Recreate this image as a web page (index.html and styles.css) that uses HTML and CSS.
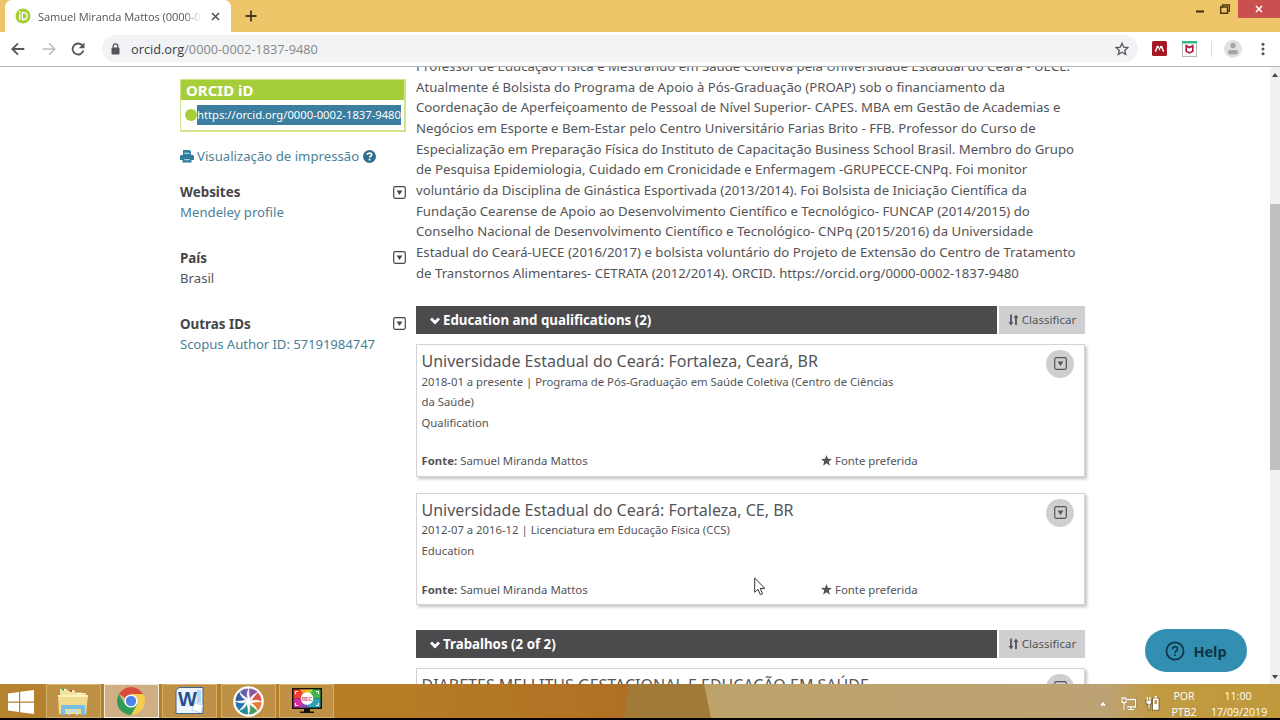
FILE: index.html
```html
<!doctype html>
<html lang="pt-BR">

<head>
    <title>Samuel Miranda Mattos (0000-0002-1837-9480)</title>
    <meta charset="utf-8">
    <link rel="stylesheet" href="styles.css">
</head>

<body>
    <svg width="0" height="0" class="defs">
        <symbol id="toggle" viewBox="0 0 13 13">
            <rect x="0.7" y="0.7" width="11.6" height="11.6" rx="1.5" fill="none" stroke="currentColor" stroke-width="1.2"/>
            <path d="M3.6 4.5h5.8L6.5 9z" fill="currentColor"/>
        </symbol>
        <symbol id="chevron" viewBox="0 0 10 8">
            <path d="M1 1.6l4 4 4-4" fill="none" stroke="currentColor" stroke-width="2.8"/>
        </symbol>
        <symbol id="sort" viewBox="0 0 11 12">
            <path d="M3 0.5v8M8 11V3" stroke="currentColor" stroke-width="1.8"/>
            <path d="M0.6 8h4.8L3 11.5zM5.6 4h4.8L8 0.5z" fill="currentColor"/>
        </symbol>
        <symbol id="star" viewBox="0 0 10 10">
            <path d="M5 0l1.3 3.5 3.7.2-2.9 2.3 1 3.7L5 7.6 1.9 9.7l1-3.7L0 3.7l3.7-.2z" fill="currentColor"/>
        </symbol>
    </svg>

    <div id="titlebar">
        <div class="tab">
            <svg class="favicon" width="16" height="16" viewBox="0 0 16 16">
                <circle cx="8" cy="8" r="7.5" fill="#a6ce39"/>
                <path d="M4.7 6v6M7.3 4.6v6.9h1.4a3.4 3.4 0 0 0 0-6.9z" fill="none" stroke="#fff" stroke-width="1.4"/>
                <circle cx="4.7" cy="4" r="0.9" fill="#fff"/>
            </svg>
            <span class="tab-title">Samuel Miranda Mattos (0000-0002</span>
            <svg width="9" height="9" viewBox="0 0 9 9"><path d="M1 1l7 7M8 1L1 8" stroke="#555" stroke-width="1.6"/></svg>
        </div>
        <svg class="new-tab" width="12" height="12" viewBox="0 0 12 12"><path d="M6 0.5v11M0.5 6h11" stroke="#4a3a20" stroke-width="1.8"/></svg>
        <div class="window-buttons">
            <svg width="8" height="3" viewBox="0 0 8 3"><path d="M0 1.5h8" stroke="#3a2a10" stroke-width="2"/></svg>
            <svg width="10" height="10" viewBox="0 0 10 10"><path d="M2.5 2.5V1h7v6H8M0.7 3h6.8v6.2H0.7z" fill="none" stroke="#4a3610" stroke-width="1.4"/></svg>
            <div class="close"><svg width="8" height="8" viewBox="0 0 8 8"><path d="M1 1l6 6M7 1L1 7" stroke="#fff" stroke-width="1.6"/></svg></div>
        </div>
    </div>

    <div id="toolbar">
        <svg class="back" width="14" height="14" viewBox="0 0 14 14"><path d="M13.3 7H1.5M7 1.3L1.3 7 7 12.7" fill="none" stroke="#55565a" stroke-width="1.8"/></svg>
        <svg class="forward" width="14" height="14" viewBox="0 0 14 14"><path d="M0.7 7h11.8M7 1.3L12.7 7 7 12.7" fill="none" stroke="#bdbdc0" stroke-width="1.6"/></svg>
        <svg class="reload" width="14" height="14" viewBox="0 0 14 14"><path d="M11.6 3.8A5.5 5.5 0 1 0 12.4 8.5" fill="none" stroke="#55565a" stroke-width="1.8"/><path d="M13.5 0.5v5.8H7.7z" fill="#55565a"/></svg>
        <div class="address">
            <svg width="9" height="12" viewBox="0 0 9 12"><rect x="0.5" y="4.5" width="8" height="7" rx="1" fill="#55565a"/><path d="M2.2 5V3.2a2.3 2.3 0 0 1 4.6 0V5" fill="none" stroke="#55565a" stroke-width="1.3"/></svg>
            <span class="url">orcid.org<i>/0000-0002-1837-9480</i></span>
            <svg width="14" height="14" viewBox="0 0 14 14"><path d="M7 1.3l1.7 3.9 4.2.4-3.2 2.8 1 4.1L7 10.3l-3.7 2.2 1-4.1L1.1 5.6l4.2-.4z" fill="none" stroke="#55565a" stroke-width="1.3"/></svg>
        </div>
        <svg class="mendeley" width="15" height="15" viewBox="0 0 15 15"><rect width="15" height="15" rx="1.5" fill="#a31a26"/><path d="M3 10.3Q4.6 9.700 4.500 7M7.500 7v2.200M12 10.300Q10.400 9.700 10.500 7" fill="none" stroke="#fff" stroke-width="1.300"/><circle cx="5.700" cy="6.200" r="1.400" fill="#fff"/><circle cx="9.300" cy="6.200" r="1.400" fill="#fff"/></svg>
        <svg class="mcafee" width="15" height="16" viewBox="0 0 15 16"><rect x="0.5" y="0.5" width="14" height="15" fill="#fff" stroke="#b5b8b8"/><path d="M0 0h15v2.5H0z" fill="#35b98b"/><path d="M4.200 4.700v5.500l3.300 1.700 3.300-1.700V4.700L7.500 6.500z" fill="none" stroke="#b0163a" stroke-width="1.600"/></svg>
        <span class="divider"></span>
        <svg class="profile" width="18" height="18" viewBox="0 0 18 18"><circle cx="9" cy="9" r="9" fill="#e0e0e1"/><circle cx="9" cy="5.5" r="2.7" fill="#a5a5a8"/><rect x="4" y="10" width="10" height="4.5" rx="2.2" fill="#a5a5a8"/></svg>
        <svg class="menu" width="4" height="14" viewBox="0 0 4 14" fill="#55565a"><circle cx="2" cy="2.2" r="1.5"/><circle cx="2" cy="7" r="1.5"/><circle cx="2" cy="11.8" r="1.5"/></svg>
    </div>

    <div id="viewport">
        <div class="page">
            <div class="sidebar">
                <div class="orcid-box">
                    <div class="orcid-head">ORCID iD</div>
                    <div class="orcid-url"><span class="id-dot"></span><span class="selected">https://orcid.org/0000-0002-1837-9480</span></div>
                </div>
                <p class="print">
                    <svg width="14" height="13" viewBox="0 0 14 13"><path d="M3 0h6.5L11 1.500V5h2l1 1v4h-2.500v2.500h-9V10H0V6l1-1h2z" fill="#2e7f9f"/><path d="M4.300 3.200h5.200M4.300 9.800h5.400" stroke="#d5e8ef" stroke-width="1.100"/></svg>
                    <a>Visualização de impressão</a>
                    <svg width="13" height="13" viewBox="0 0 13 13"><circle cx="6.5" cy="6.5" r="6.5" fill="#2e6f8f"/><path d="M4.300 4.900c.1-2.500 4.400-2.400 4.300 0 0 1.300-2 1.300-2 2.700M6.600 8.800v1.800" fill="none" stroke="#fff" stroke-width="1.700"/></svg>
                </p>
                <div class="side-section">
                    <h3>Websites <svg width="13" height="13"><use href="#toggle"/></svg></h3>
                    <a>Mendeley profile</a>
                </div>
                <div class="side-section">
                    <h3>País <svg width="13" height="13"><use href="#toggle"/></svg></h3>
                    <span>Brasil</span>
                </div>
                <div class="side-section">
                    <h3>Outras IDs <svg width="13" height="13"><use href="#toggle"/></svg></h3>
                    <a class="scopus">Scopus Author ID: 57191984747</a>
                </div>
            </div>

            <div class="main">
                <p class="bio">Professor de Educação Física e Mestrando em Saúde Coletiva pela Universidade Estadual do Ceará - UECE.<br>
                    Atualmente é Bolsista do Programa de Apoio à Pós-Graduação (PROAP) sob o financiamento da<br>
                    Coordenação de Aperfeiçoamento de Pessoal de Nível Superior- CAPES. MBA em Gestão de Academias e<br>
                    Negócios em Esporte e Bem-Estar pelo Centro Universitário Farias Brito - FFB. Professor do Curso de<br>
                    Especialização em Preparação Física do Instituto de Capacitação Business School Brasil. Membro do Grupo<br>
                    de Pesquisa Epidemiologia, Cuidado em Cronicidade e Enfermagem -GRUPECCE-CNPq. Foi monitor<br>
                    voluntário da Disciplina de Ginástica Esportivada (2013/2014). Foi Bolsista de Iniciação Científica da<br>
                    Fundação Cearense de Apoio ao Desenvolvimento Científico e Tecnológico- FUNCAP (2014/2015) do<br>
                    Conselho Nacional de Desenvolvimento Científico e Tecnológico- CNPq (2015/2016) da Universidade<br>
                    Estadual do Ceará-UECE (2016/2017) e bolsista voluntário do Projeto de Extensão do Centro de Tratamento<br>
                    de Transtornos Alimentares- CETRATA (2012/2014). ORCID. https://orcid.org/0000-0002-1837-9480</p>

                <div class="section-head">
                    <h2><svg width="10" height="8"><use href="#chevron"/></svg>Education and qualifications (2)</h2>
                    <div class="sort"><svg width="11" height="12"><use href="#sort"/></svg>Classificar</div>
                </div>
                <div class="card">
                    <div class="card-top">
                        <div class="details">
                            <h4>Universidade Estadual do Ceará: Fortaleza, Ceará, BR</h4>
                            <p>2018-01 a presente | Programa de Pós-Graduação em Saúde Coletiva (Centro de Ciências<br>da Saúde)</p>
                            <p>Qualification</p>
                        </div>
                        <div class="round"><svg width="13" height="13"><use href="#toggle"/></svg></div>
                    </div>
                    <div class="source">
                        <span><b>Fonte:</b> Samuel Miranda Mattos</span>
                        <span><svg width="11" height="11"><use href="#star"/></svg>Fonte preferida</span>
                    </div>
                </div>
                <div class="card">
                    <div class="card-top">
                        <div class="details">
                            <h4>Universidade Estadual do Ceará: Fortaleza, CE, BR</h4>
                            <p>2012-07 a 2016-12 | Licenciatura em Educação Física (CCS)</p>
                            <p>Education</p>
                        </div>
                        <div class="round"><svg width="13" height="13"><use href="#toggle"/></svg></div>
                    </div>
                    <div class="source">
                        <span><b>Fonte:</b> Samuel Miranda Mattos</span>
                        <span><svg width="11" height="11"><use href="#star"/></svg>Fonte preferida</span>
                    </div>
                </div>

                <div class="section-head works">
                    <h2><svg width="10" height="8"><use href="#chevron"/></svg>Trabalhos (2 of 2)</h2>
                    <div class="sort"><svg width="11" height="12"><use href="#sort"/></svg>Classificar</div>
                </div>
                <div class="card">
                    <div class="card-top">
                        <div class="details">
                            <h4>DIABETES MELLITUS GESTACIONAL E EDUCAÇÃO EM SAÚDE</h4>
                        </div>
                        <div class="round"><svg width="13" height="13"><use href="#toggle"/></svg></div>
                    </div>
                </div>
            </div>
        </div>
        <div class="scrollbar">
            <svg width="6" height="4" viewBox="0 0 6 4"><path d="M0 4l3-4 3 4z" fill="#444"/></svg>
            <div class="thumb"></div>
            <svg width="6" height="4" viewBox="0 0 6 4"><path d="M0 0l3 4 3-4z" fill="#444"/></svg>
        </div>
        <div class="help">
            <svg width="20" height="20" viewBox="0 0 20 20" fill="none" stroke="#0e3442"><circle cx="10" cy="10" r="8.6" stroke-width="1.7"/><path d="M7.500 8.200c0-3.400 5.100-3.200 5 0 0 1.800-2.400 1.700-2.400 3.800M10.100 13.300v1.700" stroke-width="1.700"/></svg>
            Help
        </div>
        <svg class="cursor" width="12" height="19" viewBox="0 0 12 19"><path d="M0.7 1v14.300l3.300-3 2.300 5.400 2.300-1-2.400-5.300h4.600z" fill="#fff" stroke="#333" stroke-width="1"/></svg>
    </div>

    <div id="taskbar">
        <svg class="wallpaper" width="1280" height="34" viewBox="0 0 1280 34">
            <defs>
                <linearGradient id="wood"><stop offset="0" stop-color="#b5822f"/><stop offset=".6" stop-color="#b77d26"/><stop offset="1" stop-color="#b07024"/></linearGradient>
                <linearGradient id="sand"><stop offset="0" stop-color="#bda26a"/><stop offset=".7" stop-color="#bda274"/><stop offset=".78" stop-color="#c19b42"/><stop offset="1" stop-color="#c0983c"/></linearGradient>
            </defs>
            <path d="M0 0h630v34H0z" fill="url(#wood)"/>
            <path d="M628 0h90v34h-94z" fill="#a07a36"/>
            <path d="M704 0h576v34H711z" fill="url(#sand)"/>
        </svg>
        <div class="start">
            <svg width="26" height="24" viewBox="0 0 26 24" fill="#fff"><path d="M0 3.5L11 2v9.400H0zM12.200 1.800L26 0v11.400H12.200zM0 12.700h11V22L0 20.500zM12.200 12.700H26V24l-13.800-1.800z"/></svg>
        </div>
        <div class="task">
            <svg width="32" height="28" viewBox="0 0 32 28"><path d="M3 2h7l1 2h7l1 2h10v7H3z" fill="#f3e5a0"/><path d="M5 2.500h3M13 4h4M20 6.500h5" stroke="#fff" stroke-width="1.500"/><path d="M5 2.500h2" stroke="#3a9a4a" stroke-width="2"/><path d="M13 4h2" stroke="#c44a30" stroke-width="2"/><path d="M1 8h30l-2 19H2z" fill="#f0dc8c"/><path d="M1 9h30" stroke="#fbf1bd" stroke-width="2"/><path d="M6 28v-8h20v8" fill="none" stroke="#75bfe4" stroke-width="4"/><path d="M12 28v-4h8v4" fill="none" stroke="#b9e1f3" stroke-width="2"/></svg>
        </div>
        <div class="task active">
            <svg width="28" height="28" viewBox="0 0 28 28"><path d="M14 14L1.880 7a14 14 0 0 1 24.240 0z" fill="#d94c3d"/><path d="M14 14V7h12.120A14 14 0 0 1 14 28l6-10.500z" fill="#f5cd4c"/><path d="M14 14l6.060 3.500L14 28A14 14 0 0 1 1.880 7l6.060 10.500z" fill="#2e9c58"/><circle cx="14" cy="14" r="6.600" fill="#fff"/><circle cx="14" cy="14" r="5.200" fill="#4b85e8"/></svg>
        </div>
        <div class="task">
            <svg width="29" height="28" viewBox="0 0 29 28"><path d="M4 0.500h24v26H1V3.500z" fill="#edf4fb" stroke="#3d6493"/><path d="M22 3h4v13h-4z" fill="#b8d3ee"/><path d="M19 16l9 2-2 8-9-3z" fill="#fff" stroke="#9dbfe0" stroke-width=".6"/><text x="3" y="19" class="word">W</text></svg>
        </div>
        <div class="task">
            <svg width="31" height="31" viewBox="-15.5 -15.5 31 31">
                <circle r="15.3" fill="#fff"/>
                <g stroke="#fff" stroke-width=".8">
                    <path d="M0-2Q-5-5-9.5-9.500A13.500 13.500 0 0 1 1-13.500Q-3-8 0-2z" fill="#6460a8"/>
                    <path d="M0-2Q-5-5-9.500-9.500A13.500 13.500 0 0 1 1-13.500Q-3-8 0-2z" fill="#8858a8" transform="rotate(45)"/>
                    <path d="M0-2Q-5-5-9.500-9.500A13.500 13.500 0 0 1 1-13.500Q-3-8 0-2z" fill="#dc5448" transform="rotate(90)"/>
                    <path d="M0-2Q-5-5-9.500-9.500A13.500 13.500 0 0 1 1-13.500Q-3-8 0-2z" fill="#e67a36" transform="rotate(135)"/>
                    <path d="M0-2Q-5-5-9.500-9.500A13.500 13.500 0 0 1 1-13.500Q-3-8 0-2z" fill="#4a9b60" transform="rotate(180)"/>
                    <path d="M0-2Q-5-5-9.500-9.500A13.500 13.500 0 0 1 1-13.500Q-3-8 0-2z" fill="#278b93" transform="rotate(225)"/>
                    <path d="M0-2Q-5-5-9.500-9.500A13.500 13.500 0 0 1 1-13.500Q-3-8 0-2z" fill="#2577ae" transform="rotate(270)"/>
                    <path d="M0-2Q-5-5-9.500-9.500A13.500 13.500 0 0 1 1-13.500Q-3-8 0-2z" fill="#345fa0" transform="rotate(315)"/>
                </g>
            </svg>
        </div>
        <div class="task">
            <svg width="30" height="26" viewBox="0 0 30 26">
                <rect width="30" height="21" fill="#17120f"/>
                <path d="M1.500 1.500H15v9H1.500z" fill="#ee4030"/><path d="M8 1.500h7v9z" fill="#f6a623"/>
                <path d="M15 1.500h13.500v9H15z" fill="#40b84e"/><path d="M15 1.500h6l-6 9z" fill="#c5d336"/>
                <path d="M1.500 10.500H15v9H1.500z" fill="#cf329a"/><path d="M15 10.500h13.500v9H15z" fill="#2aa5b8"/><path d="M15 10.500v9H8z" fill="#7c49bd"/>
                <path d="M3.500 6V3.500H6M24 3.500h2.500V6M3.500 15v2.500H6M24 17.500h2.500V15" fill="none" stroke="#fff"/>
                <circle cx="15" cy="10.500" r="6.300" fill="#fff"/><text x="15" y="12.600" class="rec">REC</text><path d="M12 21h6v2.500h4V25H8v-1.500h4z" fill="#17120f"/></svg>
        </div>
        <div class="tray">
            <svg width="8" height="5" viewBox="0 0 8 5"><path d="M0 5l4-5 4 5z" fill="#fff" stroke="#705020" stroke-width=".5"/></svg>
            <svg class="network" width="16" height="14" viewBox="0 0 16 14" fill="none"><path d="M6 2.500h8.500V10H6M7 12.700h6M10 10v2.700M3 6v7M1 1h4v4.500H1z" stroke="#8a6a30" stroke-width="2.200"/><path d="M6 2.500h8.500V10H6M7 12.700h6M10 10v2.700M3 6v7M1 1h4v4.500H1z" stroke="#fff" stroke-width="1.300"/></svg>
            <svg class="battery" width="15" height="15" viewBox="0 0 15 15"><path d="M7.500 2h6.500v12.300H7.500zM1 4h5.500v4H5v6H3V8H1z" fill="#fff" stroke="#5d4216" stroke-width=".7"/><path d="M9.500 1h2.500M2.300 1v3M5 1v3" stroke="#fff" stroke-width="1.300"/><path d="M9.500 4h2.500v4H9.500z" fill="#c19b42"/></svg>
            <div class="lang">POR<br>PTB2</div>
            <div class="clock">11:00<br>17/09/2019</div>
        </div>
    </div>
</body>

</html>
```

FILE: styles.css
```css
body {
    margin: 0;
    width: 1280px;
    height: 720px;
    overflow: hidden;
    background: #000;
    color: #545457;
    font-family: "Noto Sans", "Open Sans", sans-serif;
    display: flex;
    flex-direction: column;
}

h2, h3, h4, p {
    margin: 0;
}

svg {
    flex: none;
}

.defs {
    position: absolute;
}

/* browser window */
#titlebar {
    height: 32px;
    background: #efc56a;
    display: flex;
    align-items: flex-start;
}

.tab {
    box-sizing: border-box;
    width: 226px;
    height: 32px;
    margin-left: 5px;
    padding: 0 10px;
    background: #fff;
    border-radius: 7px 7px 0 0;
    display: flex;
    align-items: center;
}

.tab-title {
    width: 163px;
    margin: 0 10px 0 7px;
    overflow: hidden;
    white-space: nowrap;
    font-family: "Open Sans", sans-serif;
    font-size: 11.1px;
    letter-spacing: -0.08px;
    color: #55565a;
    -webkit-mask-image: linear-gradient(90deg, #000 90%, transparent);
}

.new-tab {
    margin: 10px 0 0 14px;
}

.window-buttons {
    margin-left: auto;
    display: flex;
    align-items: flex-start;
}

.window-buttons > svg:nth-child(1) {
    margin: 10px 16px 0 0;
}

.window-buttons > svg:nth-child(2) {
    margin: 4px 8px 0 0;
}

.close {
    width: 42px;
    height: 18px;
    background: #c9504e;
    display: flex;
    align-items: center;
    justify-content: center;
}

#toolbar {
    box-sizing: border-box;
    height: 35px;
    padding: 0 15px 1px 11px;
    background: #fff;
    border-bottom: 1px solid #b9b7b5;
    display: flex;
    align-items: center;
}

.forward {
    margin-left: 17px;
}

.reload {
    margin-left: 15px;
}

.address {
    box-sizing: border-box;
    width: 1036px;
    height: 27px;
    margin-left: 17px;
    padding: 0 9px;
    border-radius: 14px;
    background: #f1f3f4;
    display: flex;
    align-items: center;
}

.url {
    flex: 1;
    margin-left: 11px;
    font-family: "Open Sans", sans-serif;
    font-size: 12.75px;
    color: #3c3d40;
}

.url i {
    font-style: normal;
    color: #86888b;
}

.mendeley {
    margin-left: 14px;
}

.mcafee {
    margin-left: 15px;
}

.divider {
    width: 1px;
    height: 16px;
    margin: 0 12px 0 14px;
    background: #dadada;
}

.menu {
    margin-left: auto;
}

/* page */
#viewport {
    position: relative;
    height: 617px;
    overflow: hidden;
    background: #fff;
    display: flex;
    justify-content: space-between;
}

.page {
    margin-left: 180px;
    display: flex;
    gap: 10px;
    font-size: 13.2px;
    line-height: 20.67px;
}

.sidebar {
    width: 226px;
    padding-top: 12px;
}

a {
    color: #4a8299;
}

.orcid-box {
    box-sizing: border-box;
    height: 53px;
    border: 1px solid #cfe58a;
    border-width: 1px 2px 2px 1px;
}

.orcid-head {
    height: 20px;
    padding-left: 5px;
    background: #a6ce39;
    color: #fff;
    font-size: 15px;
    line-height: 20px;
    font-weight: bold;
}

.orcid-url {
    height: 30px;
    display: flex;
    align-items: center;
    padding-left: 4px;
}

.id-dot {
    flex: none;
    width: 12px;
    height: 12px;
    border-radius: 50%;
    background: #a6ce39;
}

.selected {
    background: #3b7e9f;
    color: #fff;
    font-size: 11.23px;
    white-space: nowrap;
}

.print {
    margin-top: 14px;
    display: flex;
    align-items: center;
    white-space: nowrap;
}

.print a {
    margin: 0 4px 0 3px;
}

.side-section {
    margin-bottom: 24.6px;
    white-space: nowrap;
}

.print + .side-section {
    margin-top: 15px;
}

.side-section h3 {
    display: flex;
    justify-content: space-between;
    align-items: center;
    font-size: 13.4px;
    color: #454548;
}

.scopus {
    letter-spacing: -0.1px;
}

.main {
    width: 669px;
}

.bio {
    margin: -11px 0 23px;
    white-space: nowrap;
}

.section-head {
    display: flex;
    gap: 2px;
    height: 28px;
    margin-bottom: 10px;
}

.section-head h2 {
    flex: 1;
    padding-left: 14px;
    background: #4b4a4d;
    color: #fff;
    font-size: 13.3px;
    line-height: 28px;
}

.section-head h2 svg {
    margin-right: 3px;
}

.sort {
    width: 86px;
    background: #cfcfd1;
    font-size: 11.5px;
    display: flex;
    align-items: center;
    justify-content: center;
    gap: 3px;
}

.card {
    box-sizing: border-box;
    margin-bottom: 16px;
    padding: 5.6px 10px 4px 4.5px;
    border: 1px solid #d4d2d6;
    box-shadow: 2px 2px 3px #c4c2c5;
    white-space: nowrap;
}

.card-top {
    display: flex;
    justify-content: space-between;
}

.card h4 {
    font-size: 16px;
    font-weight: normal;
}

.card p {
    font-size: 11.3px;
}

.round {
    width: 28px;
    height: 28px;
    margin-top: -1px;
    border-radius: 50%;
    background: #cfcfd1;
    display: flex;
    align-items: center;
    justify-content: center;
}

.source {
    display: grid;
    grid-template-columns: 399px auto;
    margin-top: 17.8px;
    font-size: 11.4px;
}

.source svg {
    margin-right: 3.5px;
    vertical-align: -1px;
}

.works {
    margin-top: 25px;
}

.scrollbar {
    width: 10px;
    background: #f2f1f2;
    display: flex;
    flex-direction: column;
    align-items: center;
    padding: 6px 0 5px;
    box-sizing: border-box;
}

.thumb {
    width: 10px;
    height: 266px;
    margin: 127px 0 auto;
    background: #c1bfc1;
}

.help {
    position: absolute;
    right: 33px;
    bottom: 12px;
    width: 102px;
    height: 43px;
    border-radius: 22px;
    background: #338fb2;
    color: #0e3442;
    font-size: 14.5px;
    font-weight: bold;
    display: flex;
    align-items: center;
    justify-content: center;
    gap: 8px;
}

.cursor {
    position: absolute;
    left: 754px;
    top: 510px;
}

/* windows taskbar */
#taskbar {
    position: relative;
    z-index: 0;
    height: 34px;
    display: flex;
}

.wallpaper {
    position: absolute;
    left: 0;
    top: 0;
    z-index: -1;
}

.start {
    width: 45.5px;
    padding: 6px 0 0 8px;
    box-sizing: border-box;
}

.task {
    box-sizing: border-box;
    width: 55px;
    height: 34px;
    margin-right: 3.4px;
    border: 1px solid #d2b06e;
    background: #be9146;
    overflow: hidden;
    display: flex;
    align-items: center;
    justify-content: center;
}

.active {
    background: #cfaf83;
    border-color: #f4ead8;
}

.word {
    font: bold 20px "Liberation Sans", sans-serif;
    fill: #244f92;
}

.rec {
    font: bold 5px "Liberation Sans", sans-serif;
    text-anchor: middle;
    fill: #e05050;
}

.tray {
    margin-left: auto;
    padding: 5px 15px 0 0;
    display: flex;
    align-items: center;
    color: #fff;
    font-family: "Open Sans", sans-serif;
    font-size: 10.6px;
    line-height: 16px;
    text-align: center;
    white-space: nowrap;
}

.network {
    margin-left: 14px;
}

.battery {
    margin-left: 8px;
}

.lang {
    width: 26px;
    margin-left: 11px;
}

.clock {
    width: 54px;
    margin-left: 14px;
}
```
